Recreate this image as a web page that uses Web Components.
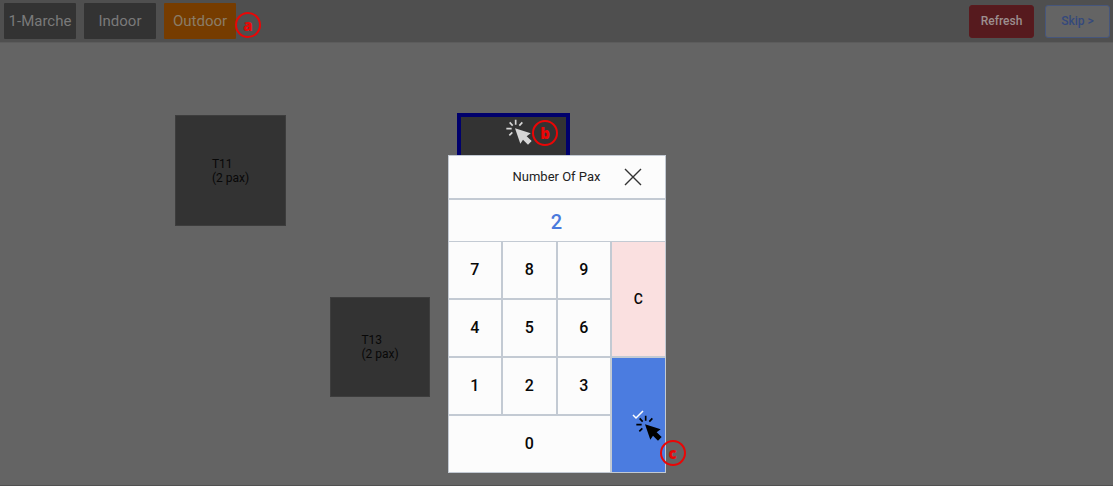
<!DOCTYPE html>
<html lang="en">
<head>
<meta charset="utf-8">
<meta name="viewport" content="width=device-width, initial-scale=1">
<title>Table selection</title>
<style>
html, body { height: 100%; }
body { margin: 0; font-family: Roboto, "Liberation Sans", sans-serif; background: #646464; color: #111; }
</style>
</head>
<body>
<pos-app></pos-app>
<script>
const define = (name, html, setup) => {
  const template = document.createElement('template');
  template.innerHTML = html;
  customElements.define(name, class extends HTMLElement {
    constructor() {
      super();
      this.attachShadow({ mode: 'open' }).append(template.content.cloneNode(true));
    }
    connectedCallback() { if (setup) setup(this, this.shadowRoot); }
  });
};

define('step-marker', `
<style>
:host { display: flex; box-sizing: border-box; width: 26px; height: 26px; border: 2px solid #ea0606; border-radius: 50%;
  align-items: center; justify-content: center; color: #ea0606; font: 800 15px/20px "Open Sans", sans-serif; }
</style>
<slot></slot>`);

define('click-cursor', `
<style>
:host { display: block; width: 28px; height: 28px; pointer-events: none; }
svg { display: block; width: 100%; height: 100%; }
</style>
<svg viewBox="104 208 84 84" aria-hidden="true">
  <path d="M136 213v15M118 221l9 10M147 231l9-10M108 240h16M117 260l9-9" fill="none" stroke="currentColor" stroke-width="5"/>
  <path d="M134 239L181 254 169 263 184 277 173 288 158 273 150 285Z" fill="currentColor"/>
</svg>`);

define('area-tab', `
<style>
:host { display: block; width: 72px; height: 36px; }
button { width: 100%; height: 100%; padding: 0; border: 0; border-radius: 1px; background: #333; color: #7a7a7a; font: 15px/20px Roboto, sans-serif; white-space: nowrap; }
:host([selected]) button { background: #763c00; color: #8a7c68; }
</style>
<button type="button"><slot></slot></button>`);

define('action-button', `
<style>
:host { display: block; width: 65px; height: 33px; }
button { box-sizing: border-box; width: 100%; height: 100%; padding: 0; border: 1px solid #5a1a1e; border-radius: 3px; background: #561a1e; color: #9c8e8e; font: 500 12px/16px Roboto, sans-serif; }
:host([plain]) button { border-color: #46567c; background: #646464; color: #34497c; }
</style>
<button type="button"><slot></slot></button>`);

define('top-bar', `
<style>
:host { display: block; background: #4f4f4f; }
header { display: flex; align-items: center; height: 43px; padding: 0 3px 0 4px; border-bottom: 1px solid #5c5c5c; box-sizing: border-box; }
nav { display: flex; gap: 8px; }
step-marker { margin-top: 8px; margin-left: -1px; }
.actions { display: flex; gap: 11px; margin-left: auto; }
</style>
<header>
  <nav aria-label="Areas">
    <area-tab>1-Marche</area-tab><area-tab>Indoor</area-tab><area-tab selected>Outdoor</area-tab>
  </nav>
  <step-marker>a</step-marker>
  <div class="actions"><action-button>Refresh</action-button><action-button plain>Skip &gt;</action-button></div>
</header>`);

define('floor-table', `
<style>
:host { position: absolute; box-sizing: border-box; width: var(--size); height: var(--size); }
button { box-sizing: border-box; width: 100%; height: 100%; display: flex; align-items: center; justify-content: center; padding: 0; border: 1px solid #3d3d3d; background: #333; color: #080808; font: 12px/14px Roboto, sans-serif; text-align: left; }
:host([selected]) button { border: 4px solid #00006c; }
</style>
<button type="button" aria-label="Table"><span><slot></slot></span></button>`,
(host, root) => {
  if (host.textContent.trim()) root.querySelector('button').removeAttribute('aria-label');
});

define('pax-dialog', `
<style>
:host { display: block; position: relative; width: 218px; }
section { border: 1px solid #c3cad3; box-sizing: border-box; background: #c3cad3; }
header { display: grid; grid-template-columns: 1fr auto 1fr; align-items: center; height: 42px; background: #fcfcfc; }
h2 { grid-column: 2; margin: 0; font: 13px/20px Roboto, sans-serif; color: #222; }
button { padding: 0; border: 0; background: #fcfcfc; color: #080808; font: 500 16px/20px Roboto, sans-serif; }
.close { justify-self: center; width: 20px; height: 20px; }
.close svg { display: block; }
output { display: block; margin: 2px 0 1px; height: 41px; font: 500 20px/44px Roboto, sans-serif; color: #4a7add; text-align: center; background: #fcfcfc; }
.keys { display: grid; grid-template-columns: repeat(4, 1fr); grid-template-rows: repeat(4, 56px); gap: 2px; }
.zero { grid-area: 4 / 1 / 5 / 4; }
.clear { grid-area: 1 / 4 / 3 / 5; background: #fae0e0; font-size: 14px; }
.ok { grid-area: 3 / 4 / 5 / 5; background: #4b7ce0; display: grid; place-items: center; }
click-cursor { position: absolute; left: 187px; top: 259px; color: #000; }
step-marker { position: absolute; left: 212px; top: 285px; }
</style>
<section role="dialog" aria-labelledby="title">
  <header>
    <h2 id="title">Number Of Pax</h2>
    <button class="close" type="button" aria-label="Close"><svg width="20" height="20" viewBox="0 0 20 20"><path d="M2 2l16 16M18 2L2 18" stroke="#333" stroke-width="1.4"/></svg></button>
  </header>
  <output>2</output>
  <div class="keys">
    <button type="button">7</button><button type="button">8</button><button type="button">9</button>
    <button type="button">4</button><button type="button">5</button><button type="button">6</button>
    <button type="button">1</button><button type="button">2</button><button type="button">3</button>
    <button class="zero" type="button">0</button>
    <button class="clear" type="button">C</button>
    <button class="ok" type="button" aria-label="Confirm"><svg width="12" height="10" viewBox="0 0 12 10"><path d="M1 5l3 3 7-7" fill="none" stroke="#fff" stroke-width="1.5"/></svg></button>
  </div>
</section>
<click-cursor></click-cursor>
<step-marker>c</step-marker>`);

define('floor-plan', `
<style>
:host { display: block; position: relative; flex: 1; border-bottom: 1px solid #505050; }
.t11 { --size: 111px; left: 175px; top: 72px; }
.t12 { --size: 113px; left: 457px; top: 70px; }
.t13 { --size: 100px; left: 330px; top: 254px; }
click-cursor { position: absolute; left: 505px; top: 75px; color: #d6d6d6; }
step-marker { position: absolute; left: 532px; top: 77px; }
</style>
<floor-table class="t11">T11<br>(2 pax)</floor-table>
<floor-table class="t12" selected></floor-table>
<floor-table class="t13">T13<br>(2 pax)</floor-table>
<click-cursor></click-cursor>
<step-marker>b</step-marker>`);

define('pos-app', `
<style>
:host { position: relative; display: flex; flex-direction: column; min-height: 100%; }
.overlay { position: absolute; inset: 0; display: flex; justify-content: center; align-items: flex-start; padding-top: 155px; pointer-events: none; }
pax-dialog { pointer-events: auto; }
</style>
<top-bar></top-bar>
<floor-plan></floor-plan>
<div class="overlay"><pax-dialog></pax-dialog></div>`);
</script>
</body>
</html>
